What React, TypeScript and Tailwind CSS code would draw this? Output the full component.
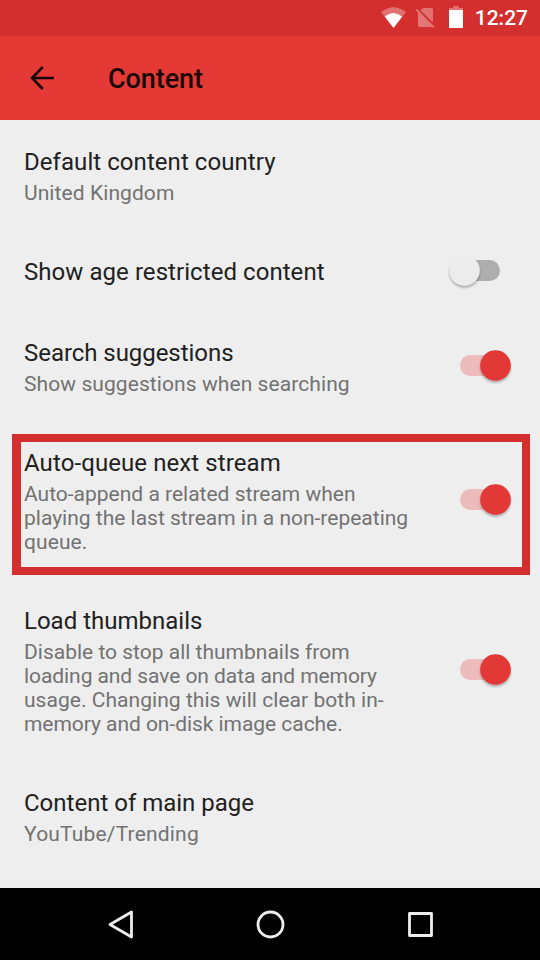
import React from "react";

function Toggle({ on, className = "mb-[3px]" }: { on: boolean; className?: string }) {
  return (
    <svg width="68" height="40" viewBox="-8 0 68 40" className={`shrink-0 ${className}`}>
      <rect x="4" y="10" width={on ? 50 : 40} height="21" rx="10.5" fill={on ? "#ecbcbc" : "#aeaeae"} />
      <circle
        cx={on ? 39.5 : 8.5}
        cy="20.5"
        r="15.3"
        fill={on ? "#e23936" : "#ececec"}
        className="drop-shadow-[0_2px_1px_rgba(0,0,0,0.27)]"
      />
    </svg>
  );
}

type Line = { text: string; tracking?: string };
type RowProps = {
  title: Line;
  lines?: Line[];
  on?: boolean;
  className: string;
  toggleClass?: string;
};

function Row({ title, lines = [], on, className, toggleClass }: RowProps) {
  return (
    <div className={`flex items-center justify-between ${className}`}>
      <div className="whitespace-nowrap">
        <div className={`text-[24px] leading-[32px] text-[#212121] ${title.tracking ?? ""}`}>{title.text}</div>
        {lines.length > 0 && (
          <div className="mt-[3px] text-[21px] leading-[24px] text-[#727272]">
            {lines.map((line) => (
              <div key={line.text} className={line.tracking ?? ""}>{line.text}</div>
            ))}
          </div>
        )}
      </div>
      {on !== undefined && <Toggle on={on} className={toggleClass} />}
    </div>
  );
}

export default function App() {
  return (
    <div className="flex h-[960px] w-[540px] flex-col overflow-hidden bg-[#eeeeee] font-[Roboto,sans-serif]">
      <div className="flex h-9 shrink-0 items-center justify-end bg-[#d32f2f] pr-3 text-white">
        <svg width="90" height="36" viewBox="380 0 90 36">
          <path d="M381 12Q393.500 2.500 406 12L393.500 28Z" fill="#fff" opacity=".32" />
          <path d="M384.800 16.500Q393.500 9.500 402.200 16.500L393.500 28Z" fill="#fff" />
          <path d="M423 8h8.500q1.500 0 1.500 1.500V22.500L420.500 10.500z" fill="#fff" opacity=".32" />
          <path d="M416.800 9L434.800 27L433.600 28.200L432 26.600Q431.500 27 431 27H419.500q-1.500 0-1.500-1.500V12.600L415.600 10.200z" fill="#fff" opacity=".34" />
          <path d="M449 8h4V6h6v2h4v2h-14z" fill="#fff" opacity=".32" />
          <path d="M449 10h14v18h-14z" fill="#fff" />
        </svg>
        <span className="ml-[5px] mt-[2px] text-[21px] font-medium">12:27</span>
      </div>
      <div className="flex h-[84px] shrink-0 items-center bg-[#e53935] pl-[30px] text-[#1a0606]">
        <svg width="24" height="24" viewBox="0 0 24 24" fill="none" stroke="currentColor" strokeWidth="2.600">
          <path d="M24 12H2M12.800 1L2 12l10.800 11" />
        </svg>
        <span className="ml-[54px] mt-[2px] text-[27px] font-medium tracking-[-0.08px]">Content</span>
      </div>
      <main className="flex h-[768px] shrink-0 flex-col">
        <Row
          className="mt-[26px] h-[59px] px-6"
          title={{ text: "Default content country", tracking: "tracking-[0.06px]" }}
          lines={[{ text: "United Kingdom", tracking: "tracking-[0.08px]" }]}
        />
        <Row
          className="mt-[51px] h-8 pl-6 pr-6"
          title={{ text: "Show age restricted content", tracking: "tracking-[0.06px]" }}
          on={false}
          toggleClass="mb-1"
        />
        <Row
          className="mt-[49px] h-[59px] pl-6 pr-6"
          title={{ text: "Search suggestions", tracking: "tracking-[-0.05px]" }}
          lines={[{ text: "Show suggestions when searching", tracking: "tracking-[0.08px]" }]}
          on
        />
        <div className="ml-3 mt-[38px] h-[141px] w-[518px] border-8 border-l-9 border-[#d32f2f]">
          <Row
            className="mt-[5px] h-[107px] pl-[3px] pr-[6px]"
            title={{ text: "Auto-queue next stream", tracking: "tracking-[0.09px]" }}
            lines={[
              { text: "Auto-append a related stream when" },
              { text: "playing the last stream in a non-repeating" },
              { text: "queue.", tracking: "tracking-[0.1px]" },
            ]}
            on
          />
        </div>
        <Row
          className="mt-[30px] h-[131px] pl-6 pr-6"
          title={{ text: "Load thumbnails" }}
          lines={[
            { text: "Disable to stop all thumbnails from" },
            { text: "loading and save on data and memory", tracking: "tracking-[-0.07px]" },
            { text: "usage. Changing this will clear both in-", tracking: "tracking-[0.04px]" },
            { text: "memory and on-disk image cache.", tracking: "tracking-[-0.05px]" },
          ]}
          on
        />
        <Row
          className="mt-[51px] h-[59px] px-6"
          title={{ text: "Content of main page" }}
          lines={[{ text: "YouTube/Trending", tracking: "tracking-[0.18px]" }]}
        />
      </main>
      <nav className="flex h-[72px] shrink-0 items-center justify-center bg-black">
        <svg width="540" height="72" fill="none" stroke="#ededed" strokeWidth="2.800" strokeLinejoin="round">
          <path d="M110 36.500L131.500 24v25z" />
          <circle cx="270.500" cy="36.500" r="12.500" />
          <rect x="409.500" y="25.500" width="22" height="22" />
        </svg>
      </nav>
    </div>
  );
}
